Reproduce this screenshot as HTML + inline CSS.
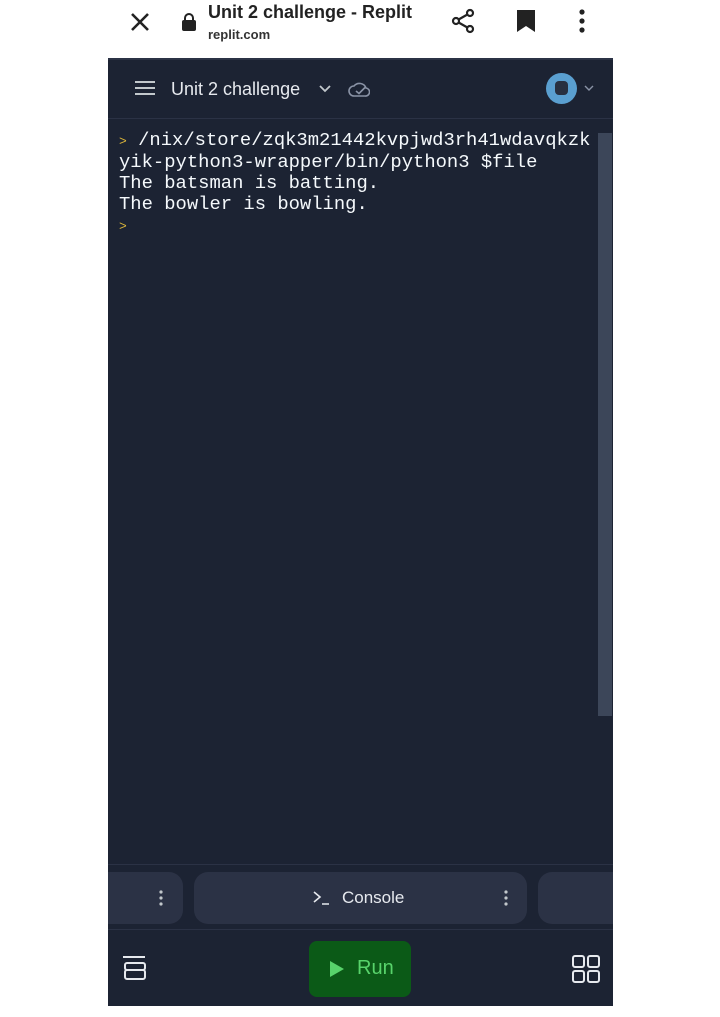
<!DOCTYPE html>
<html><head><style>
*{margin:0;padding:0;box-sizing:border-box}
body{width:720px;height:1017px;background:#fff;position:relative;overflow:hidden;font-family:"Liberation Sans",sans-serif}
.a{position:absolute}
.term{font-family:"Liberation Mono",monospace;font-size:18.85px;line-height:21px;color:#f5f9fc;white-space:pre}
</style></head><body>
<!-- browser bar -->
<svg class="a" style="left:128px;top:10px" width="24" height="24" viewBox="0 0 24 24"><path d="M4 4L20 20M20 4L4 20" stroke="#222" stroke-width="2.6"/></svg>
<svg class="a" style="left:181px;top:12px" width="16" height="20" viewBox="0 0 16 20"><path d="M4 9V6a4 4 0 0 1 8 0v3" stroke="#222" stroke-width="2" fill="none"/><rect x="1" y="8" width="14" height="11" rx="2" fill="#222"/></svg>
<div class="a" style="left:208px;top:2px;font-size:18px;font-weight:bold;color:#222">Unit 2 challenge - Replit</div>
<div class="a" style="left:208px;top:27px;font-size:13px;font-weight:bold;color:#333">replit.com</div>
<svg class="a" style="left:450px;top:7px" width="28" height="28" viewBox="0 0 28 28"><g stroke="#222" stroke-width="2.2" fill="none"><circle cx="20" cy="6" r="3"/><circle cx="6" cy="14" r="3"/><circle cx="20" cy="22" r="3"/><path d="M8.6 12.5L17.4 7.5M8.6 15.5L17.4 20.5"/></g></svg>
<svg class="a" style="left:516px;top:9px" width="20" height="24" viewBox="0 0 20 24"><path d="M1 1H19V23L10 17L1 23Z" fill="#222"/></svg>
<svg class="a" style="left:576px;top:9px" width="12" height="24"><circle cx="6" cy="3" r="2.6" fill="#222"/><circle cx="6" cy="12" r="2.6" fill="#222"/><circle cx="6" cy="21" r="2.6" fill="#222"/></svg>
<!-- app -->
<div class="a" style="left:108px;top:58px;width:505px;height:948px;background:#1c2333;overflow:hidden">
<div class="a" style="left:0;top:0;width:505px;height:2px;background:#2b3245"></div>
<div class="a" style="left:0;top:806px;width:505px;height:1px;background:#2b3245"></div>
<div class="a" style="left:-18px;top:814px;width:93px;height:52px;border-radius:14px;background:#2b3245"></div>
<div class="a" style="left:86px;top:814px;width:333px;height:52px;border-radius:14px;background:#2b3245"></div>
<div class="a" style="left:430px;top:814px;width:90px;height:52px;border-radius:14px;background:#2b3245"></div>
<div class="a" style="left:0;top:871px;width:505px;height:1px;background:#2b3245"></div>
</div>
<svg class="a" style="left:135px;top:80px" width="20" height="16"><g stroke="#c2c8cc" stroke-width="2"><path d="M0 2H20M0 8H20M0 14H20"/></g></svg>
<div class="a" style="left:171px;top:79px;font-size:18px;color:#e6e9ee">Unit 2 challenge</div>
<svg class="a" style="left:318px;top:84px" width="14" height="10"><path d="M2 2L7 7L12 2" stroke="#c2c8cc" stroke-width="1.8" fill="none"/></svg>
<svg class="a" style="left:348px;top:80px" width="22" height="18" viewBox="0 0 22 18"><path d="M6 16a5 5 0 0 1 0-10a7 7 0 0 1 12 2a4 4 0 0 1-1 8Z" stroke="#8a93a6" stroke-width="1.6" fill="none"/><path d="M8 11l3 2.5 6-6" stroke="#8a93a6" stroke-width="1.6" fill="none"/></svg>
<div class="a" style="left:546px;top:73px;width:31px;height:31px;border-radius:50%;background:#5a9fd0"></div>
<div class="a" style="left:555px;top:81px;width:13px;height:14px;border-radius:4px;background:#283040"></div>
<svg class="a" style="left:584px;top:85px" width="10" height="7"><path d="M1 1L5 5L9 1" stroke="#8a93a6" stroke-width="1.4" fill="none"/></svg>
<div class="a" style="left:108px;top:118px;width:505px;height:1px;background:#2b3245"></div>
<!-- terminal -->
<div class="a term" style="left:119px;top:130px"><span style="color:#d9b43a;font-size:13px">&gt;</span> /nix/store/zqk3m21442kvpjwd3rh41wdavqkzk
yik-python3-wrapper/bin/python3 $file
The batsman is batting.
The bowler is bowling.
<span style="color:#d9b43a;font-size:13px">&gt;</span></div>
<div class="a" style="left:598px;top:133px;width:14px;height:583px;background:#3c4659"></div>
<!-- tabs content -->
<svg class="a" style="left:158px;top:889px" width="6" height="18"><circle cx="3" cy="3" r="1.6" fill="#c2c8cc"/><circle cx="3" cy="9" r="1.6" fill="#c2c8cc"/><circle cx="3" cy="15" r="1.6" fill="#c2c8cc"/></svg>
<svg class="a" style="left:503px;top:889px" width="6" height="18"><circle cx="3" cy="3" r="1.6" fill="#c2c8cc"/><circle cx="3" cy="9" r="1.6" fill="#c2c8cc"/><circle cx="3" cy="15" r="1.6" fill="#c2c8cc"/></svg>
<svg class="a" style="left:312px;top:890px" width="20" height="16"><path d="M2 2L8 7L2 12M10 14H17" stroke="#e6e9ee" stroke-width="1.6" fill="none"/></svg>
<div class="a" style="left:342px;top:888px;font-size:17px;color:#e6e9ee">Console</div>
<!-- bottom -->
<svg class="a" style="left:121px;top:954px" width="28" height="28" viewBox="0 0 28 28"><g stroke="#e6e9ee" stroke-width="2" fill="none"><path d="M2 3H24"/><rect x="4" y="9" width="20" height="7" rx="2"/><rect x="4" y="16" width="20" height="9" rx="2"/></g></svg>
<div class="a" style="left:309px;top:941px;width:102px;height:56px;border-radius:8px;background:#0b5a17"></div>
<svg class="a" style="left:329px;top:960px" width="16" height="18"><path d="M1 1L15 9L1 17Z" fill="#58d36b"/></svg>
<div class="a" style="left:357px;top:957px;font-size:20px;color:#58d36b">Run</div>
<svg class="a" style="left:571px;top:954px" width="30" height="30"><g stroke="#e6e9ee" stroke-width="2" fill="none"><rect x="2" y="2" width="11" height="11" rx="2"/><rect x="17" y="2" width="11" height="11" rx="2"/><rect x="2" y="17" width="11" height="11" rx="2"/><rect x="17" y="17" width="11" height="11" rx="2"/></g></svg>
</body></html>
